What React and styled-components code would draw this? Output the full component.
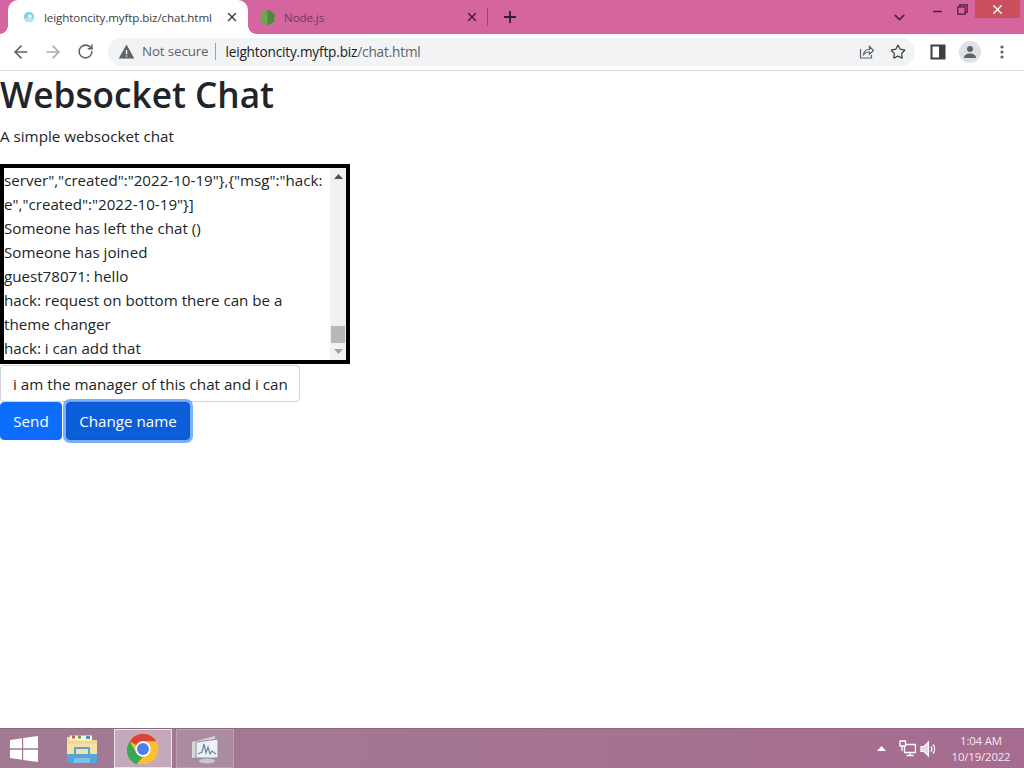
import React from 'react';
import styled, { createGlobalStyle } from 'styled-components';
import { ArrowLeft, ArrowRight, RotateCw, Star, X, Plus, ChevronDown, Minus } from 'lucide-react';

const GlobalStyle = createGlobalStyle`
  html, body {
    margin: 0;
    padding: 0;
    background: #fff;
  }
  * {
    box-sizing: border-box;
  }
`;

const uiFont = `"Open Sans", "Noto Sans", "Liberation Sans", sans-serif`;

const Screen = styled.div`
  width: 1024px;
  height: 768px;
  display: flex;
  flex-direction: column;
  overflow: hidden;
  font-family: ${uiFont};
  color: #212529;
`;

// browser window chrome
const TabStrip = styled.div`
  height: 34px;
  flex: none;
  display: flex;
  align-items: center;
  padding-left: 8px;
  background: #d5659f;
`;

const Tab = styled.div`
  position: relative;
  width: 240px;
  height: 34px;
  flex: none;
  display: flex;
  align-items: center;
  padding: 0 9px 0 ${({ $active }) => ($active ? '15px' : '11px')};
  border-radius: 10px 10px 0 0;
  background: ${({ $active }) => ($active ? '#fff' : 'transparent')};

  &::before,
  &::after {
    content: '';
    display: ${({ $active }) => ($active ? 'block' : 'none')};
    position: absolute;
    bottom: 0;
    width: 8px;
    height: 8px;
  }
  &::before {
    left: -8px;
    background: radial-gradient(circle at 0 0, transparent 7.5px, #fff 8px);
  }
  &::after {
    right: -8px;
    background: radial-gradient(circle at 100% 0, transparent 7.5px, #fff 8px);
  }
`;

const TabTitle = styled.span`
  flex: 1;
  margin-left: ${({ $active }) => ($active ? '9px' : '8px')};
  font-size: 11.6px;
  letter-spacing: -0.1px;
  white-space: nowrap;
  color: ${({ $active }) => ($active ? '#3c4043' : '#6d3a5c')};
`;

const TabDivider = styled.div`
  width: 1px;
  height: 18px;
  margin-left: -1px;
  background: #8c4a73;
`;

const NewTab = styled.div`
  width: 44px;
  height: 28px;
  display: flex;
  align-items: center;
  justify-content: center;
  color: #33202c;
`;

const StripSpacer = styled.div`
  flex: 1;
`;

const TabSearch = styled.div`
  height: 28px;
  width: 30px;
  display: flex;
  align-items: center;
  justify-content: center;
  color: #5d1f48;
`;

const WindowControls = styled.div`
  align-self: flex-start;
  display: flex;
  margin: 0 4px 0 11px;
`;

const WindowButton = styled.div`
  width: ${({ $close }) => ($close ? '45px' : '25px')};
  height: 18px;
  display: flex;
  align-items: center;
  justify-content: center;
  padding-top: ${({ $low }) => ($low ? '4px' : '0')};
  background: ${({ $close }) => ($close ? '#c9505c' : 'transparent')};
  color: ${({ $close }) => ($close ? '#fff' : '#4a1a3a')};
`;

const Toolbar = styled.div`
  height: 37px;
  flex: none;
  display: flex;
  align-items: center;
  padding: 0 0 1px 5px;
  background: #fff;
  border-bottom: 1px solid #dadce0;
`;

const NavButton = styled.div`
  width: 32px;
  height: 28px;
  flex: none;
  display: flex;
  align-items: center;
  justify-content: center;
  color: ${({ $disabled }) => ($disabled ? '#a9abae' : '#5f6368')};
`;

const Omnibox = styled.div`
  width: 807px;
  height: 28px;
  margin-left: 7px;
  flex: none;
  display: flex;
  align-items: center;
  padding: 0 1px 0 10px;
  border-radius: 14px;
  background: #f1f3f4;
`;

const SecureLabel = styled.span`
  margin-left: 7px;
  padding-right: 7px;
  font-size: 13.4px;
  letter-spacing: -0.15px;
  color: #5f6368;
  border-right: 1px solid #9aa0a6;
  line-height: 17px;
`;

const UrlText = styled.span`
  flex: 1;
  margin-left: 9px;
  font-size: 13.6px;
  letter-spacing: -0.17px;
  color: #202124;
`;

const UrlPath = styled.span`
  color: #5f6368;
`;

const OmniIcon = styled.div`
  width: 32px;
  display: flex;
  justify-content: center;
  color: #5f6368;
`;

const ToolbarEnd = styled.div`
  flex: 1;
  display: flex;
  align-items: center;
  padding-left: 7px;
  color: #5f6368;
`;

const ToolbarIcon = styled.div`
  width: 32px;
  display: flex;
  justify-content: center;
  align-items: center;
`;

const Avatar = styled.div`
  width: 22px;
  height: 22px;
  border-radius: 50%;
  background: #dfe1e5;
  display: flex;
  align-items: center;
  justify-content: center;
`;

// page content
const Page = styled.main`
  flex: 1;
  min-height: 0;
  background: #fff;
`;

const Heading = styled.h1`
  margin: -1px 0 6px;
  font-size: 35.2px;
  font-weight: 600;
  line-height: 48px;
`;

const Lead = styled.p`
  margin: 0 0 16px;
  font-size: 15.2px;
  line-height: 24px;
`;

const ChatLog = styled.div`
  width: 350px;
  height: 200px;
  display: flex;
  border: 4px solid #000;
  background: #fff;
`;

const ChatLines = styled.div`
  flex: 1;
  min-width: 0;
`;

const ChatLine = styled.div`
  height: 24px;
  font-size: 15.15px;
  line-height: 24px;
  white-space: nowrap;
`;

const ScrollBar = styled.div`
  width: 16px;
  flex: none;
  display: flex;
  flex-direction: column;
  align-items: stretch;
  background: #f1f1f1;
`;

const ScrollTrack = styled.div`
  flex: 1;
  display: flex;
  flex-direction: column;
  justify-content: flex-end;
`;

const ScrollThumb = styled.div`
  height: 17px;
  margin: 0 1px;
  background: #b8b8b8;
`;

const ScrollArrow = styled.div`
  height: 17px;
  display: flex;
  align-items: center;
  justify-content: center;
`;

const MessageInput = styled.input`
  display: block;
  width: 300px;
  height: 37px;
  margin-top: 1px;
  padding: 6px 12px;
  font-family: ${uiFont};
  font-size: 15.2px;
  line-height: 24px;
  color: #212529;
  background: #fff;
  border: 1px solid #ced4da;
  border-radius: 4px;
  outline: none;
`;

const ButtonRow = styled.div`
  display: flex;
  gap: 4px;
`;

const Button = styled.button`
  height: 38px;
  width: ${({ $width }) => $width}px;
  padding: 0;
  font-family: ${uiFont};
  font-size: 15.2px;
  color: #fff;
  background: ${({ $focused }) => ($focused ? '#0b5ed7' : '#0d6efd')};
  border: 1px solid ${({ $focused }) => ($focused ? '#0a58ca' : '#0d6efd')};
  border-radius: 4px;
  box-shadow: ${({ $focused }) => ($focused ? '0 0 0 3px rgba(49, 132, 253, 0.65)' : 'none')};
`;

// windows taskbar
const Taskbar = styled.footer`
  height: 40px;
  flex: none;
  display: flex;
  align-items: stretch;
  background: linear-gradient(90deg, #a27a93 0%, #a57591 50%, #a66c90 100%);
  border-top: 1px solid #8f6780;
`;

const StartButton = styled.div`
  width: 48px;
  display: flex;
  align-items: center;
  justify-content: center;
`;

const TaskItem = styled.div`
  width: ${({ $width }) => $width || 60}px;
  margin-left: ${({ $gap }) => $gap || 0}px;
  display: flex;
  align-items: center;
  justify-content: center;
  background: ${({ $running, $active }) =>
    $active ? '#c3a9b9' : $running ? '#ab8ba0' : 'transparent'};
  border: 1px solid ${({ $running, $active }) =>
    $active ? '#ece4ea' : $running ? '#b9a0b0' : 'transparent'};
`;

const Tray = styled.div`
  margin-left: auto;
  display: flex;
  align-items: center;
  padding-right: 5px;
  color: #fff;
`;

const TrayIcon = styled.div`
  width: ${({ $width }) => $width}px;
  display: flex;
  justify-content: center;
  align-items: center;
`;

const Clock = styled.div`
  width: 76px;
  font-size: 11.4px;
  line-height: 16px;
  text-align: center;
  letter-spacing: -0.15px;
  color: #f5e8f0;
  margin-left: 4px;
`;

const TabFavicon = () => (
  <svg width="12" height="12" viewBox="0 0 14 14">
    <circle cx="7" cy="7" r="6" fill="#7fd3e0" />
    <path d="M2 8a5 5 0 0 0 10 0z" fill="#b6e6ee" />
    <circle cx="8" cy="6" r="2" fill="#fff" />
  </svg>
);

const NodeFavicon = () => (
  <svg width="17" height="17" viewBox="0 0 16 16">
    <path d="M8 0.5l6.5 3.7v7.6L8 15.5l-6.5-3.7V4.2z" fill="#6aa84a" />
    <path d="M8 0.5l6.5 3.7v7.6L8 15.5z" fill="#4a8a3a" />
  </svg>
);

const Warning = () => (
  <svg width="17" height="17" viewBox="0 0 24 24">
    <path d="M1 22h22L12 2z" fill="#5f6368" />
    <path d="M11 10h2v6h-2zM11 17.5h2v2h-2z" fill="#f1f3f4" />
  </svg>
);

const ShareIcon = () => (
  <svg width="17" height="17" viewBox="0 0 17 17" fill="none" stroke="#5f6368" strokeWidth="1.2">
    <path d="M2.5 6v9h11v-3" />
    <path d="M5.5 11.5c.4-3 2.6-5 6-5V3.5l4 4-4 3.8V9c-2.5 0-4.5.7-6 2.5z" />
  </svg>
);

const SidePanelIcon = () => (
  <svg width="16" height="16" viewBox="0 0 16 16">
    <path d="M1.5 1.5h13v13h-13z" fill="#fff" stroke="#3c4043" strokeWidth="2" />
    <path d="M9 1.5h5.5v13H9z" fill="#3c4043" />
  </svg>
);

const PersonIcon = () => (
  <svg width="14" height="14" viewBox="0 0 14 14" fill="#5f6368">
    <circle cx="7" cy="4" r="3" />
    <path d="M1 13c0-3 2.6-4.500 6-4.500s6 1.500 6 4.500z" />
  </svg>
);

const MenuDots = () => (
  <svg width="4" height="14" viewBox="0 0 4 14" fill="#5f6368">
    <circle cx="2" cy="2" r="1.6" />
    <circle cx="2" cy="7" r="1.6" />
    <circle cx="2" cy="12" r="1.6" />
  </svg>
);

const RestoreIcon = () => (
  <svg width="11" height="11" viewBox="0 0 11 11" fill="none" stroke="currentColor" strokeWidth="1.2">
    <path d="M0.8 2.8h7.400v7.400H0.8z" />
    <path d="M2.8 2.8V0.8h7.400v7.400H8.2" />
  </svg>
);

const ArrowGlyph = ({ color, down }) => (
  <svg width="9" height="5" viewBox="0 0 9 5" fill={color}>
    <path d={down ? 'M0 0h9L4.5 5z' : 'M0 5h9L4.5 0z'} />
  </svg>
);

const WindowsLogo = () => (
  <svg width="28" height="26" viewBox="0 0 28 26" fill="#fff">
    <path d="M0 4l12-1.7v10H0zM13.2 2.1L28 0v12.3H13.2zM0 13.7h12v10L0 22zM13.2 13.7H28V26l-14.8-2.100z" />
  </svg>
);

const FolderIcon = () => (
  <svg width="32" height="30" viewBox="0 0 32 30">
    <path d="M1 3h13l2 3h15v22H1z" fill="#f3d98b" />
    <path d="M4 1.5h22v5H4z" fill="#fff6d8" />
    <path d="M6 1.5h3v3H6z" fill="#d9534f" />
    <path d="M12 1.5h3v3h-3z" fill="#5aa05a" />
    <path d="M20 2h4v3h-4z" fill="#5b8fd0" />
    <path d="M1 10h30v18H1z" fill="#f6e2a4" />
    <path d="M1 20h7v-7h16v7h7v9H1z" fill="#58a4d8" />
    <path d="M10 15h12v5H10z" fill="#f6e2a4" />
    <path d="M8 24h16v5H8z" fill="#7fc0e6" />
  </svg>
);

const ChromeIcon = () => (
  <svg width="32" height="32" viewBox="0 0 48 48">
    <circle cx="24" cy="24" r="23" fill="#fbc02d" />
    <path d="M24 1a23 23 0 0 1 19.9 11.5H24a11.500 11.500 0 0 0-10 5.800L4.100 12.500A23 23 0 0 1 24 1z" fill="#db4437" />
    <path d="M4.1 12.5L14 29.800c2 3.500 5.800 5.700 10 5.700L14 47A23 23 0 0 1 4.100 12.500z" fill="#3aa757" />
    <circle cx="24" cy="24" r="11.5" fill="#fff" />
    <circle cx="24" cy="24" r="9" fill="#4a80e8" />
  </svg>
);

const MonitorIcon = () => (
  <svg width="32" height="30" viewBox="0 0 32 30">
    <path d="M3 8L26 2v20L3 24z" fill="#d8d8d8" />
    <path d="M7 8l22-3v19H7z" fill="#eef0f2" stroke="#8d8d95" strokeWidth="1" />
    <path d="M9 20l4-2 2-8 2 9 2-6 2 7 2-3 4 3" fill="none" stroke="#6a87a8" strokeWidth="1.2" />
    <ellipse cx="18" cy="27" rx="8" ry="2.5" fill="#c9c9c9" />
  </svg>
);

const NetworkIcon = () => (
  <svg width="17" height="17" viewBox="0 0 17 17" fill="none" stroke="#fff" strokeWidth="1.3">
    <path d="M5.5 4.5h11v8h-11z" />
    <path d="M11 12.5v3M7.5 15.5h7" />
    <path d="M1 1h5.500v5H1z" fill="#a66c90" />
    <path d="M3 6v5" />
  </svg>
);

const SpeakerIcon = () => (
  <svg width="18" height="18" viewBox="0 0 18 18" fill="none" stroke="#fff" strokeWidth="1.2">
    <path d="M1 6.5h3L8.500 2v14L4 11.500H1z" fill="#e6d8e0" />
    <path d="M11 6.5a4 4 0 0 1 0 5M13 4.500a7 7 0 0 1 0 9" />
  </svg>
);

const chatLines = [
  'server","created":"2022-10-19"},{"msg":"hack:',
  'e","created":"2022-10-19"}]',
  'Someone has left the chat ()',
  'Someone has joined',
  'guest78071: hello',
  'hack: request on bottom there can be a',
  'theme changer',
  'hack: i can add that',
];

const App = () => (
  <Screen>
    <GlobalStyle />
    <TabStrip>
      <Tab $active>
        <TabFavicon />
        <TabTitle $active>leightoncity.myftp.biz/chat.html</TabTitle>
        <X size={14} strokeWidth={2.4} color="#3c4043" />
      </Tab>
      <Tab>
        <NodeFavicon />
        <TabTitle>Node.js</TabTitle>
        <X size={14} strokeWidth={2.4} color="#4a1a3a" />
      </Tab>
      <TabDivider />
      <NewTab>
        <Plus size={18} strokeWidth={2.4} />
      </NewTab>
      <StripSpacer />
      <TabSearch>
        <ChevronDown size={17} strokeWidth={2.6} />
      </TabSearch>
      <WindowControls>
        <WindowButton $low>
          <Minus size={13} strokeWidth={2.4} />
        </WindowButton>
        <WindowButton>
          <RestoreIcon />
        </WindowButton>
        <WindowButton $close>
          <X size={15} strokeWidth={2} />
        </WindowButton>
      </WindowControls>
    </TabStrip>

    <Toolbar>
      <NavButton>
        <ArrowLeft size={20} strokeWidth={2} />
      </NavButton>
      <NavButton $disabled>
        <ArrowRight size={20} strokeWidth={2} />
      </NavButton>
      <NavButton>
        <RotateCw size={17} strokeWidth={2.2} />
      </NavButton>
      <Omnibox>
        <Warning />
        <SecureLabel>Not secure</SecureLabel>
        <UrlText>
          leightoncity.myftp.biz<UrlPath>/chat.html</UrlPath>
        </UrlText>
        <OmniIcon>
          <ShareIcon />
        </OmniIcon>
        <OmniIcon>
          <Star size={16} strokeWidth={1.8} color="#3c4043" />
        </OmniIcon>
      </Omnibox>
      <ToolbarEnd>
        <ToolbarIcon>
          <SidePanelIcon />
        </ToolbarIcon>
        <ToolbarIcon>
          <Avatar>
            <PersonIcon />
          </Avatar>
        </ToolbarIcon>
        <ToolbarIcon>
          <MenuDots />
        </ToolbarIcon>
      </ToolbarEnd>
    </Toolbar>

    <Page>
      <Heading>Websocket Chat</Heading>
      <Lead>A simple websocket chat</Lead>
      <ChatLog>
        <ChatLines>
          {chatLines.map((line, i) => (
            <ChatLine key={i}>{line}</ChatLine>
          ))}
        </ChatLines>
        <ScrollBar>
          <ScrollArrow>
            <ArrowGlyph color="#505050" />
          </ScrollArrow>
          <ScrollTrack>
            <ScrollThumb />
          </ScrollTrack>
          <ScrollArrow>
            <ArrowGlyph color="#a3a3a3" down />
          </ScrollArrow>
        </ScrollBar>
      </ChatLog>
      <MessageInput readOnly value="i am the manager of this chat and i can" />
      <ButtonRow>
        <Button $width={62}>Send</Button>
        <Button $width={124} $focused>Change name</Button>
      </ButtonRow>
    </Page>

    <Taskbar>
      <StartButton>
        <WindowsLogo />
      </StartButton>
      <TaskItem $width={60} $gap={4}>
        <FolderIcon />
      </TaskItem>
      <TaskItem $width={58} $gap={2} $active>
        <ChromeIcon />
      </TaskItem>
      <TaskItem $width={58} $gap={4} $running>
        <MonitorIcon />
      </TaskItem>
      <Tray>
        <TrayIcon $width={28}>
          <ArrowGlyph color="#fff" />
        </TrayIcon>
        <TrayIcon $width={24}>
          <NetworkIcon />
        </TrayIcon>
        <TrayIcon $width={20}>
          <SpeakerIcon />
        </TrayIcon>
        <Clock>
          1:04 AM
          <br />
          10/19/2022
        </Clock>
      </Tray>
    </Taskbar>
  </Screen>
);

export default App;
